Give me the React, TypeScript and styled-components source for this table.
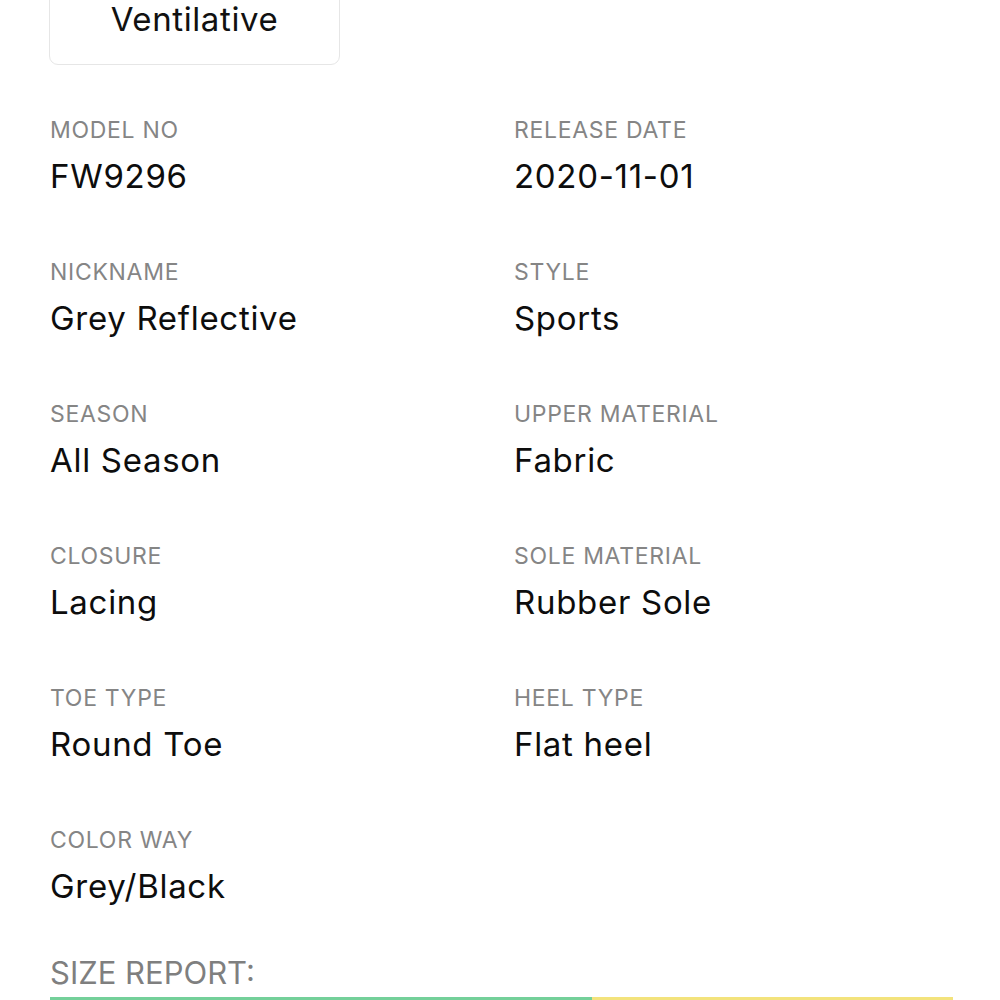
import styled, { createGlobalStyle } from "styled-components";

interface Spec {
  label: string;
  value: string;
}

const specs: Spec[] = [
  { label: "Model No", value: "FW9296" },
  { label: "Release Date", value: "2020-11-01" },
  { label: "Nickname", value: "Grey Reflective" },
  { label: "Style", value: "Sports" },
  { label: "Season", value: "All Season" },
  { label: "Upper Material", value: "Fabric" },
  { label: "Closure", value: "Lacing" },
  { label: "Sole Material", value: "Rubber Sole" },
  { label: "Toe Type", value: "Round Toe" },
  { label: "Heel Type", value: "Flat heel" },
  { label: "Color Way", value: "Grey/Black" }
];

const App = () => {
  return (
    <>
      <GlobalStyle />
      <Page>
        <FeatureCard>Ventilative</FeatureCard>
        <SpecGrid>
          {specs.map((s) => (
            <SpecItem key={s.label}>
              <Label>{s.label}</Label>
              <Value>{s.value}</Value>
            </SpecItem>
          ))}
        </SpecGrid>
        <SizeReport>
          <ReportTitle>Size Report:</ReportTitle>
          <Bar>
            <Segment $color="#74d09a" $grow={542} />
            <Segment $color="#f3e37c" $grow={361} />
          </Bar>
        </SizeReport>
      </Page>
    </>
  );
};

const GlobalStyle = createGlobalStyle`
  body {
    margin: 0;
    background: #ffffff;
    font-family: Inter, "Noto Sans", sans-serif;
    overflow: hidden;
  }
`;
const Page = styled.div`
  height: 1000px;
  overflow: hidden;
  padding: 0 47px 0 50px;
  box-sizing: border-box;
`;
const FeatureCard = styled.div`
  margin-top: -36px;
  margin-left: -1px;
  width: 291px;
  height: 101px;
  box-sizing: border-box;
  border: 1px solid #e6e6e6;
  border-radius: 9px;
  display: flex;
  justify-content: center;
  padding-top: 37px;
  font-size: 33px;
  line-height: 34px;
  letter-spacing: 0.6px;
  color: #111;
`;
const SpecGrid = styled.div`
  display: grid;
  grid-template-columns: 464px 1fr;
  row-gap: 62px;
  margin-top: 51px;
`;
const SpecItem = styled.div`
  display: flex;
  flex-direction: column;
  gap: 12px;
`;
const Label = styled.span`
  font-size: 23px;
  line-height: 28px;
  letter-spacing: 0.7px;
  color: #858585;
  text-transform: uppercase;
`;
const Value = styled.span`
  font-size: 33px;
  line-height: 40px;
  letter-spacing: 0.7px;
  color: #0d0d0d;
`;
const SizeReport = styled.div`
  margin-top: 49px;
`;
const ReportTitle = styled.div`
  font-size: 31px;
  line-height: 36px;
  color: #7f7f7f;
  text-transform: uppercase;
`;
const Bar = styled.div`
  display: flex;
  margin-top: 6px;
  height: 6px;
`;
const Segment = styled.div<{ $color: string; $grow: number }>`
  flex: ${(p) => p.$grow};
  background: ${(p) => p.$color};
`;

export default App;
